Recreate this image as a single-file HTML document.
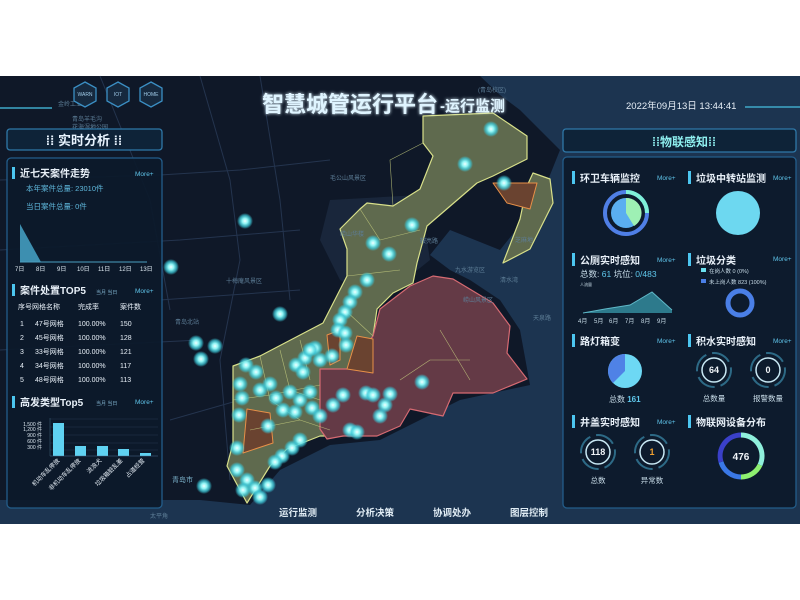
<!DOCTYPE html>
<html><head><meta charset="utf-8"><style>
html,body{margin:0;padding:0;background:#fff;}
svg{display:block}
text{font-family:"Liberation Sans","Noto Sans CJK SC",sans-serif;}
</style></head><body>
<svg width="800" height="600" viewBox="0 0 800 600" xmlns="http://www.w3.org/2000/svg">
<defs>
<radialGradient id="dot"><stop offset="0" stop-color="#f0ffff"/><stop offset="0.35" stop-color="#8ff4f4"/><stop offset="0.7" stop-color="#3cc8d8" stop-opacity="0.75"/><stop offset="1" stop-color="#3cc8d8" stop-opacity="0"/></radialGradient>
<filter id="glow"><feGaussianBlur stdDeviation="1.5" result="b"/><feMerge><feMergeNode in="b"/><feMergeNode in="SourceGraphic"/></feMerge></filter>
</defs>
<rect x="0" y="0" width="800" height="600" fill="#fff"/>
<rect x="0" y="76" width="800" height="448" fill="#0f1828"/>
<path d="M480 76 L800 76 L800 524 L0 524 L0 500 L200 500 L250 505 L280 470 L330 445 L380 440 L420 420 L460 400 L530 385 L520 330 L500 300 L470 280 L450 270 L430 255 L450 230 L500 250 L540 200 L560 150 L540 130 L520 110 L500 95 Z" fill="#1c3450"/>
<path d="M330 200 L420 195 L430 260 L380 300 L340 280 L320 240 Z" fill="#1b2a40" opacity="0.8"/>
<g stroke="#24344e" stroke-width="1" fill="none">
<path d="M0 180 L160 175 L240 170 L330 160"/><path d="M200 76 L230 180 L240 260 L220 360 L230 480"/>
<path d="M0 250 L180 240 L300 230"/><path d="M160 300 L300 290"/><path d="M100 76 L150 200 L170 310"/>
<path d="M0 350 L200 340"/><path d="M260 76 L280 200 L290 300"/><path d="M170 420 L240 400"/>
</g>
<g stroke-linejoin="round">
<path d="M423 116 L493 113 L527 136 L527 159 L493 176 L477 183 L427 226 L417 263 L413 283 L393 293 L377 309 L373 336 L373 376 L367 393 L393 409 L393 429 L343 436 L320 436 L287 449 L270 466 L247 503 L227 466 L233 443 L233 366 L260 356 L323 323 L347 276 L347 249 L340 229 L360 209 L367 203 L393 206 L420 189 L433 156 L423 143 Z" fill="#5f6a4e" stroke="#d8e08a" stroke-width="1.2"/>
<path d="M380 309 L410 286 L433 276 L453 279 L493 303 L510 326 L507 353 L527 379 L493 393 L453 393 L443 416 L410 409 L400 426 L377 436 L343 436 L327 439 L320 429 L320 369 L347 369 L373 336 Z" fill="#643a46" stroke="#d66a72" stroke-width="1.2"/>
<path d="M533 173 L550 179 L553 203 L530 249 L503 263 L520 219 L527 186 Z" fill="#5f6a4e" stroke="#d8e08a" stroke-width="1.2"/>
<path d="M493 183 L537 183 L530 209 L507 203 Z" fill="#6a4330" stroke="#e89048" stroke-width="1"/>
<path d="M357 336 L373 339 L373 373 L347 369 Z" fill="#6a4330" stroke="#e89048" stroke-width="1"/>
<path d="M247 409 L270 413 L273 443 L243 453 Z" fill="#6a4330" stroke="#e89048" stroke-width="1"/>
<path d="M327 335 L340 330 L340 360 L330 365 Z" fill="#6a4330" stroke="#e89048" stroke-width="1"/>
<g stroke="#c8d080" stroke-width="0.6" fill="none" opacity="0.8">
<path d="M260 356 L270 400 L300 420 L330 430"/><path d="M280 350 L290 390 L320 400"/><path d="M300 340 L310 380"/><path d="M233 400 L270 395 L320 385"/><path d="M250 430 L300 420"/><path d="M360 209 L380 240 L420 230"/><path d="M393 206 L390 160 L423 143"/><path d="M347 276 L400 270"/><path d="M373 336 L345 310"/><path d="M440 330 L470 380"/><path d="M400 380 L430 360 L470 360"/>
</g>
</g>
<g font-size="6" fill="#5d7d96">
<text x="330" y="180">毛公山风景区</text><text x="226" y="283">十梅庵风景区</text><text x="175" y="324">青岛北站</text><text x="420" y="243">鞍亮路</text><text x="455" y="272">九水游览区</text><text x="500" y="282">清水湾</text><text x="463" y="302">崂山风景区</text><text x="533" y="320">天泉路</text><text x="515" y="242">芝麻地</text><text x="172" y="482" fill="#7ab0c8" font-size="7">青岛市</text><text x="150" y="518">太平角</text><text x="340" y="236">崂山华楼</text><text x="478" y="92">(青岛校区)</text><text x="58" y="106">金岭工业</text><text x="72" y="121">青岛羊毛沟</text><text x="72" y="129">花海湿地公园</text>
</g>
<g fill="url(#dot)">
<circle cx="491" cy="129" r="8"/><circle cx="465" cy="164" r="8"/><circle cx="504" cy="183" r="8"/><circle cx="412" cy="225" r="8"/><circle cx="373" cy="243" r="8"/><circle cx="389" cy="254" r="8"/><circle cx="367" cy="280" r="8"/><circle cx="245" cy="221" r="8"/><circle cx="171" cy="267" r="8"/><circle cx="280" cy="314" r="8"/><circle cx="196" cy="343" r="8"/><circle cx="215" cy="346" r="8"/><circle cx="201" cy="359" r="8"/><circle cx="422" cy="382" r="8"/><circle cx="204" cy="486" r="8"/>
<circle cx="355" cy="292" r="8"/><circle cx="350" cy="302" r="8"/><circle cx="345" cy="312" r="8"/><circle cx="340" cy="320" r="8"/><circle cx="338" cy="330" r="8"/><circle cx="345" cy="333" r="8"/><circle cx="346" cy="345" r="8"/>
<circle cx="315" cy="348" r="8"/><circle cx="305" cy="358" r="8"/><circle cx="320" cy="360" r="8"/><circle cx="332" cy="356" r="8"/><circle cx="296" cy="365" r="8"/><circle cx="246" cy="365" r="8"/><circle cx="256" cy="372" r="8"/><circle cx="240" cy="384" r="8"/><circle cx="242" cy="398" r="8"/><circle cx="260" cy="390" r="8"/><circle cx="270" cy="384" r="8"/><circle cx="276" cy="398" r="8"/><circle cx="290" cy="392" r="8"/><circle cx="300" cy="400" r="8"/><circle cx="310" cy="392" r="8"/><circle cx="283" cy="410" r="8"/><circle cx="295" cy="412" r="8"/><circle cx="312" cy="408" r="8"/><circle cx="320" cy="416" r="8"/><circle cx="333" cy="405" r="8"/><circle cx="343" cy="395" r="8"/>
<circle cx="300" cy="440" r="8"/><circle cx="292" cy="448" r="8"/><circle cx="282" cy="456" r="8"/><circle cx="275" cy="462" r="8"/><circle cx="237" cy="448" r="8"/><circle cx="268" cy="426" r="8"/><circle cx="237" cy="470" r="8"/><circle cx="247" cy="480" r="8"/><circle cx="255" cy="488" r="8"/><circle cx="243" cy="490" r="8"/><circle cx="260" cy="497" r="8"/><circle cx="268" cy="485" r="8"/><circle cx="239" cy="415" r="8"/>
<circle cx="366" cy="393" r="8"/><circle cx="373" cy="395" r="8"/><circle cx="390" cy="394" r="8"/><circle cx="385" cy="405" r="8"/><circle cx="380" cy="416" r="8"/><circle cx="350" cy="430" r="8"/><circle cx="357" cy="432" r="8"/><circle cx="303" cy="372" r="8"/><circle cx="310" cy="350" r="8"/>
</g>
<line x1="0" y1="108" x2="52" y2="108" stroke="#3fa8c8" stroke-width="1.5"/>
<g fill="#16293e" stroke="#3b8fc4" stroke-width="1.3">
<polygon points="85,82 96,88 96,101 85,107 74,101 74,88"/><polygon points="118,82 129,88 129,101 118,107 107,101 107,88"/><polygon points="151,82 162,88 162,101 151,107 140,101 140,88"/>
</g>
<g font-size="5" fill="#9ec9e6" text-anchor="middle"><text x="85" y="96">WARN</text><text x="118" y="96">IOT</text><text x="151" y="96">HOME</text></g>
<g filter="url(#glow)"><text x="262" y="112" font-size="22" font-weight="bold" fill="#dff4ff">智慧城管运行平台</text><text x="440" y="111" font-size="15" font-weight="bold" fill="#dff4ff">-运行监测</text></g>
<text x="626" y="109" font-size="9.5" fill="#e6eef6">2022年09月13日  13:44:41</text>
<line x1="745" y1="107" x2="800" y2="107" stroke="#3fa8c8" stroke-width="1.5"/>
<rect x="7" y="129" width="155" height="21" rx="3" fill="#0e2338" stroke="#2f78a8" stroke-width="1.3"/>
<text x="84" y="145" font-size="13" font-weight="bold" fill="#e8f4ff" text-anchor="middle">⁞⁞ 实时分析 ⁞⁞</text>
<rect x="7" y="158" width="155" height="350" rx="4" fill="#0c1a2b" fill-opacity="0.93" stroke="#235d8a" stroke-width="1.3"/>
<g fill="#e8f0f8" font-weight="bold" font-size="10">
<rect x="12" y="167" width="3" height="12" fill="#4cc6f0"/><text x="20" y="177">近七天案件走势</text>
<rect x="12" y="284" width="3" height="12" fill="#4cc6f0"/><text x="20" y="294">案件处置TOP5</text>
<rect x="12" y="396" width="3" height="12" fill="#4cc6f0"/><text x="20" y="406">高发类型Top5</text>
</g>
<g font-size="6.5" fill="#5fc4ea"><text x="135" y="176">More+</text><text x="135" y="293">More+</text><text x="135" y="404">More+</text></g>
<g font-size="5" fill="#7fb0cc"><text x="96" y="294">当月 当日</text><text x="96" y="405">当月 当日</text></g>
<g font-size="7.5" fill="#5fb8dc"><text x="26" y="191">本年案件总量:  23010件</text><text x="26" y="209">当日案件总量:  0件</text></g>
<polygon points="20,224 20,262 41,262" fill="#3d8fb0"/>
<line x1="20" y1="262" x2="147" y2="262" stroke="#4a9ec0" stroke-width="1"/>
<g font-size="6" fill="#dde8f0"><text x="15" y="271">7日</text><text x="36" y="271">8日</text><text x="57" y="271">9日</text><text x="77" y="271">10日</text><text x="98" y="271">11日</text><text x="119" y="271">12日</text><text x="140" y="271">13日</text></g>
<g font-size="7" fill="#e8f0f8">
<text x="18" y="309">序号网格名称</text><text x="78" y="309">完成率</text><text x="120" y="309">案件数</text>
<text x="20" y="326">1</text><text x="35" y="326">47号网格</text><text x="78" y="326">100.00%</text><text x="120" y="326">150</text>
<text x="20" y="340">2</text><text x="35" y="340">45号网格</text><text x="78" y="340">100.00%</text><text x="120" y="340">128</text>
<text x="20" y="354">3</text><text x="35" y="354">33号网格</text><text x="78" y="354">100.00%</text><text x="120" y="354">121</text>
<text x="20" y="368">4</text><text x="35" y="368">34号网格</text><text x="78" y="368">100.00%</text><text x="120" y="368">117</text>
<text x="20" y="382">5</text><text x="35" y="382">48号网格</text><text x="78" y="382">100.00%</text><text x="120" y="382">113</text>
</g>
<g stroke="#22384e" stroke-width="0.5"><line x1="50" y1="419" x2="158" y2="419"/><line x1="50" y1="427" x2="158" y2="427"/><line x1="50" y1="435" x2="158" y2="435"/><line x1="50" y1="443" x2="158" y2="443"/><line x1="50" y1="450" x2="158" y2="450"/></g>
<line x1="50" y1="418" x2="50" y2="456" stroke="#3a5870" stroke-width="0.6"/>
<g font-size="5" fill="#dde8f0" text-anchor="end"><text x="42" y="426">1,500 件</text><text x="42" y="431">1,200 件</text><text x="42" y="437">900 件</text><text x="42" y="443">600 件</text><text x="42" y="449">300 件</text></g>
<g fill="#5fd2f2"><rect x="53" y="423" width="11" height="33"/><rect x="75" y="446" width="11" height="10"/><rect x="97" y="446" width="11" height="10"/><rect x="118" y="449" width="11" height="7"/><rect x="140" y="453" width="11" height="3"/></g>
<line x1="50" y1="456" x2="158" y2="456" stroke="#4a7090" stroke-width="0.6"/>
<g font-size="6" fill="#e8f0f8" text-anchor="end">
<text transform="translate(60,461) rotate(-45)">机动车乱停放</text>
<text transform="translate(81,461) rotate(-45)">非机动车乱停放</text>
<text transform="translate(102,461) rotate(-45)">流浪犬</text>
<text transform="translate(123,461) rotate(-45)">垃圾箱脏乱差</text>
<text transform="translate(145,461) rotate(-45)">占道经营</text>
</g>
<rect x="563" y="129" width="233" height="23" rx="3" fill="#0e2338" stroke="#2f78a8" stroke-width="1.3"/>
<text x="684" y="146" font-size="12" font-weight="bold" fill="#8ff0f0" text-anchor="middle">⁞⁞物联感知⁞⁞</text>
<rect x="563" y="157" width="233" height="351" rx="4" fill="#0c1a2b" fill-opacity="0.93" stroke="#235d8a" stroke-width="1.3"/>
<g fill="#4cc6f0"><rect x="572" y="171" width="3" height="13"/><rect x="688" y="171" width="3" height="13"/><rect x="572" y="253" width="3" height="13"/><rect x="688" y="253" width="3" height="13"/><rect x="572" y="334" width="3" height="13"/><rect x="688" y="334" width="3" height="13"/><rect x="572" y="415" width="3" height="13"/><rect x="688" y="415" width="3" height="13"/></g>
<g font-size="10" font-weight="bold" fill="#e8f0f8">
<text x="580" y="182">环卫车辆监控</text><text x="696" y="182">垃圾中转站监测</text>
<text x="580" y="264">公厕实时感知</text><text x="696" y="264">垃圾分类</text>
<text x="580" y="345">路灯箱变</text><text x="696" y="345">积水实时感知</text>
<text x="580" y="426">井盖实时感知</text><text x="696" y="426">物联网设备分布</text>
</g>
<g font-size="6.5" fill="#5fc4ea"><text x="657" y="180">More+</text><text x="773" y="180">More+</text><text x="657" y="262">More+</text><text x="773" y="261">More+</text><text x="657" y="343">More+</text><text x="773" y="343">More+</text><text x="657" y="424">More+</text></g>
<circle cx="626" cy="213" r="21" fill="none" stroke="#4f7fe6" stroke-width="4"/>
<path d="M626 192 A21 21 0 0 1 647 213" fill="none" stroke="#7ff0d8" stroke-width="4"/>
<circle cx="626" cy="213" r="15" fill="#5aaef0"/>
<path d="M626 213 L626 198 A15 15 0 0 1 634 226 Z" fill="#9ef0b4"/>
<circle cx="738" cy="213" r="22" fill="#6dd8f0"/>
<g font-size="8.5" fill="#5fc8ec"><text x="580" y="277"><tspan fill="#c8dce8">总数: </tspan>61  <tspan fill="#c8dce8">坑位: </tspan>0/483</text></g>
<text x="580" y="286" font-size="4" fill="#c8dce8">人流量</text>
<polygon points="583,313 605,309 630,305 652,292 672,310 672,313" fill="#2d7a8c"/>
<polyline points="583,313 605,309 630,305 652,292 672,310" fill="none" stroke="#5fb8c8" stroke-width="1"/>
<g font-size="6" fill="#c8dce8"><text x="578" y="323">4月</text><text x="594" y="323">5月</text><text x="609" y="323">6月</text><text x="625" y="323">7月</text><text x="641" y="323">8月</text><text x="657" y="323">9月</text></g>
<rect x="701" y="268" width="5" height="4" fill="#6ae0f0"/><text x="709" y="273" font-size="5.5" fill="#c8dce8">在岗人数 0 (0%)</text>
<rect x="701" y="279" width="5" height="4" fill="#4a7fe6"/><text x="709" y="284" font-size="5.5" fill="#c8dce8">未上岗人数 823 (100%)</text>
<circle cx="740" cy="303" r="12" fill="none" stroke="#4a7fe6" stroke-width="5"/>
<circle cx="625" cy="371" r="17" fill="#6dd8f4"/>
<path d="M625 371 L625 354 A17 17 0 0 0 613 383 Z" fill="#4f82e6"/>
<text x="609" y="402" font-size="8" fill="#c8dce8">总数 <tspan fill="#5fc8ec" font-weight="bold">161</tspan></text>
<g fill="none" stroke="#2d6a86">
<circle cx="714" cy="370" r="17" stroke-width="2" stroke-dasharray="20 6"/><circle cx="714" cy="370" r="12" stroke="#c8e8f4" stroke-width="1.5"/>
<circle cx="768" cy="370" r="17" stroke-width="2" stroke-dasharray="20 6"/><circle cx="768" cy="370" r="12" stroke="#c8e8f4" stroke-width="1.5"/>
<circle cx="598" cy="452" r="17" stroke-width="2" stroke-dasharray="20 6"/><circle cx="598" cy="452" r="12" stroke="#c8e8f4" stroke-width="1.5"/>
<circle cx="652" cy="452" r="17" stroke-width="2" stroke-dasharray="20 6"/><circle cx="652" cy="452" r="12" stroke="#c8e8f4" stroke-width="1.5"/>
</g>
<g font-weight="bold" text-anchor="middle" font-size="9" fill="#f0f4f8"><text x="714" y="373">64</text><text x="768" y="373">0</text><text x="598" y="455">118</text><text x="652" y="455" fill="#f0a030">1</text></g>
<g font-size="7.5" fill="#c8dce8" text-anchor="middle"><text x="714" y="401">总数量</text><text x="768" y="401">报警数量</text><text x="598" y="483">总数</text><text x="652" y="483">异常数</text></g>
<g fill="none" stroke-width="5">
<path d="M741 435 A21 21 0 0 1 760 465" stroke="#8ff0dc"/>
<path d="M760 465 A21 21 0 0 1 741 477" stroke="#8ef070"/>
<path d="M741 477 A21 21 0 0 1 721 462" stroke="#3a78e6"/>
<path d="M721 462 A21 21 0 0 1 741 435" stroke="#3a40c8"/>
</g>
<text x="741" y="460" font-size="10" font-weight="bold" fill="#f0f4f8" text-anchor="middle">476</text>
<g font-size="9.5" font-weight="bold" fill="#e0ecf4" text-anchor="middle"><text x="298" y="516">运行监测</text><text x="375" y="516">分析决策</text><text x="452" y="516">协调处办</text><text x="529" y="516">图层控制</text></g>
</svg>
</body></html>
